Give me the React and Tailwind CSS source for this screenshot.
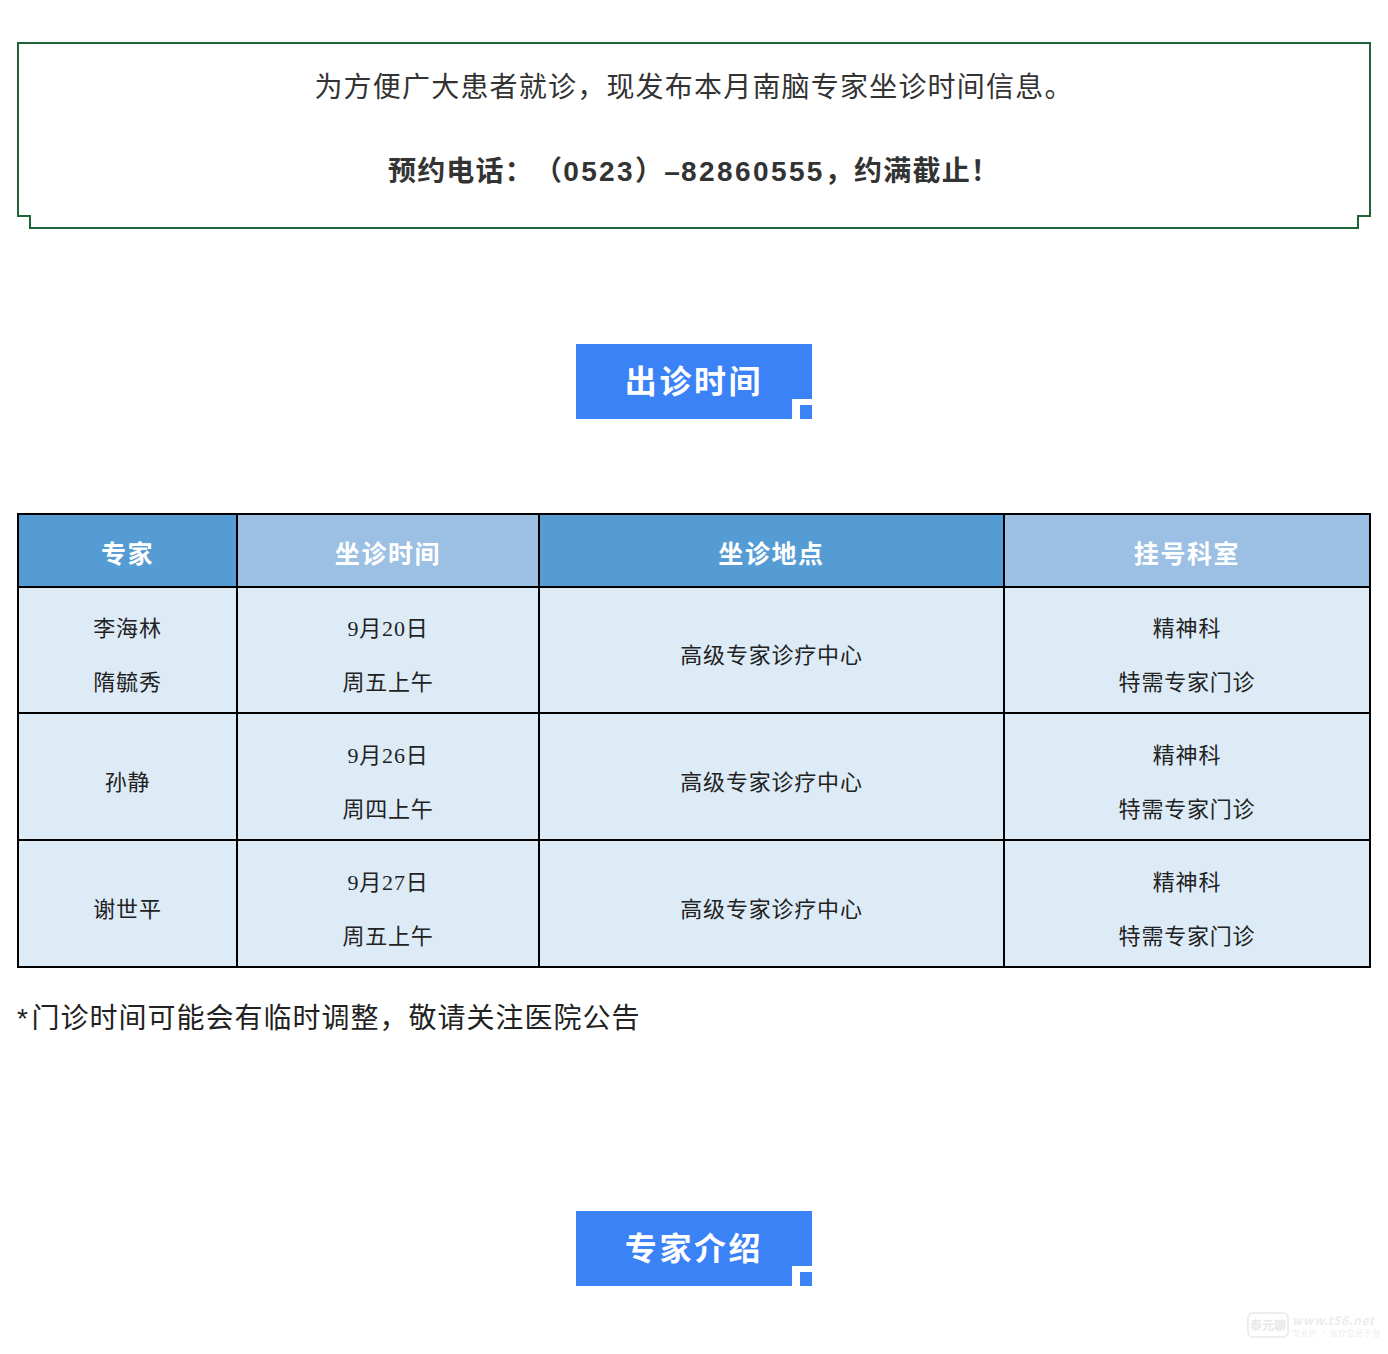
import React from 'react';

const rows = [
  { names: ['李海林', '隋毓秀'], time: ['9月20日', '周五上午'], h: 'h-[126px]' },
  { names: ['孙静'], time: ['9月26日', '周四上午'], h: 'h-[127px]' },
  { names: ['谢世平'], time: ['9月27日', '周五上午'], h: 'h-[127px]' },
];

function SectionTitle({ children }) {
  return (
    <div className="relative w-[236px] h-[75px] mx-auto bg-[#3b82f6] flex items-center justify-center pb-[5px]">
      <span className="font-['Noto_Sans_CJK_SC',sans-serif] text-[32px] leading-none font-bold text-white tracking-[2.6px]">{children}</span>
      <div className="absolute right-0 bottom-0 w-5 h-5 bg-white flex items-end justify-end">
        <div className="w-3 h-[14px] bg-[#3b82f6]"></div>
      </div>
    </div>
  );
}

function Lines({ items }) {
  return (
    <div className="flex flex-col gap-[24px]">
      {items.map(t => <p key={t} className="leading-[30px]">{t}</p>)}
    </div>
  );
}

export default function App() {
  return (
    <div className="relative w-[1388px] h-[1354px] bg-white overflow-hidden font-['Noto_Sans_CJK_SC',sans-serif] text-[#333333]">
      <div className="pt-[42px] px-[17px]">
        <div className="relative h-[187px] border-2 border-[#1f6336] flex flex-col items-center pt-[24px] text-[28px] tracking-[1.2px] font-['Liberation_Sans','Noto_Sans_CJK_SC',sans-serif] [text-spacing-trim:space-all]">
          <p className="leading-[40px]">为方便广大患者就诊，现发布本月南脑专家坐诊时间信息。</p>
          <p className="leading-[40px] mt-[44px] font-bold">预约电话：（<span className="tracking-[2.4px]">0523</span>）–<span className="tracking-[2.4px]">82860555</span>，约满截止！</p>
          <div className="absolute -left-[2px] -bottom-[2px] w-[14px] h-[14px] bg-white border-t-2 border-r-2 border-[#1f6336]"></div>
          <div className="absolute -right-[2px] -bottom-[2px] w-[14px] h-[14px] bg-white border-t-2 border-l-2 border-[#1f6336]"></div>
        </div>
      </div>

      <div className="mt-[115px]">
        <SectionTitle>出诊时间</SectionTitle>
      </div>

      <div className="mt-[94px] px-[17px]">
        <table className="w-[1352px] table-fixed border-collapse border-2 border-black font-['Liberation_Serif','Noto_Sans_CJK_SC',serif] text-[22px] text-[#222222] tracking-[0.8px]">
          <colgroup>
            <col className="w-[219px]" />
            <col className="w-[302px]" />
            <col className="w-[465px]" />
            <col className="w-[366px]" />
          </colgroup>
          <thead>
            <tr className="h-[73px] text-white text-[25px] font-bold tracking-[1.6px]">
              <th className="pt-[8px] border-2 border-black bg-[#559bd4]">专家</th>
              <th className="pt-[8px] border-2 border-black bg-[#9bc0e4]">坐诊时间</th>
              <th className="pt-[8px] border-2 border-black bg-[#559bd4]">坐诊地点</th>
              <th className="pt-[8px] border-2 border-black bg-[#9bc0e4]">挂号科室</th>
            </tr>
          </thead>
          <tbody>
            {rows.map(r => (
              <tr key={r.time[0]} className={`${r.h} bg-[#ddebf7] text-center`}>
                <td className="pt-[12px] border-2 border-black"><Lines items={r.names} /></td>
                <td className="pt-[12px] border-2 border-black"><Lines items={r.time} /></td>
                <td className="pt-[11px] border-2 border-black">高级专家诊疗中心</td>
                <td className="pt-[12px] border-2 border-black"><Lines items={['精神科', '特需专家门诊']} /></td>
              </tr>
            ))}
          </tbody>
        </table>
      </div>

      <p className="pl-[17px] mt-[31px] text-[28px] leading-[40px] tracking-[1px] text-[#222222] font-['Liberation_Sans','Noto_Sans_CJK_SC',sans-serif]"><span className="tracking-[3.5px]">*</span>门诊时间可能会有临时调整，敬请关注医院公告</p>

      <div className="mt-[172px]">
        <SectionTitle>专家介绍</SectionTitle>
      </div>

      {/* faint site watermark */}
      <div className="absolute left-[1247px] top-[1312px] flex items-center gap-[3px] opacity-70">
        <div className="w-[42px] h-[26px] border-2 border-[#e6e6e6] rounded-[6px] text-[12px] leading-none text-[#dedede] font-bold flex items-center justify-center">泰元聊</div>
        <div className="flex flex-col text-[#e6e6e6]">
          <span className="text-[12px] leading-[14px] italic font-bold tracking-[0.6px]">www.t56.net</span>
          <span className="text-[8px] leading-[11px] tracking-[0.4px]">专业的 · 医疗信息平台</span>
        </div>
      </div>
    </div>
  );
}
